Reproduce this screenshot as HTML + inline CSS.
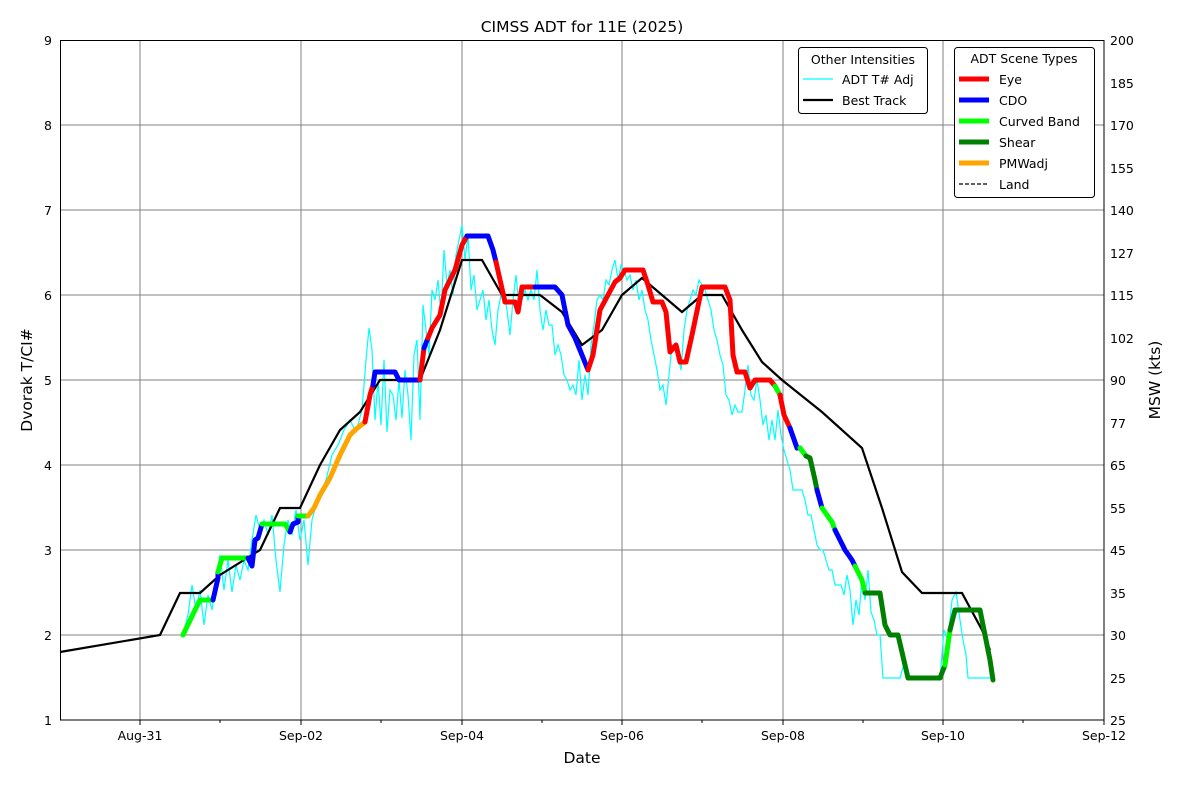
<!DOCTYPE html>
<html><head><meta charset="utf-8"><style>
html,body{margin:0;padding:0;background:#fff;width:1200px;height:800px;overflow:hidden}
text{font-family:"DejaVu Sans","Liberation Sans",sans-serif;fill:#000}
</style></head><body>
<svg width="1200" height="800" viewBox="0 0 1200 800" xmlns="http://www.w3.org/2000/svg">
<rect width="1200" height="800" fill="#fff"/>
<g stroke="#808080" stroke-width="1">
<line x1="140" y1="40" x2="140" y2="720"/><line x1="301" y1="40" x2="301" y2="720"/><line x1="462" y1="40" x2="462" y2="720"/><line x1="622" y1="40" x2="622" y2="720"/><line x1="783" y1="40" x2="783" y2="720"/><line x1="943" y1="40" x2="943" y2="720"/>
<line x1="60" y1="125" x2="1104" y2="125"/><line x1="60" y1="210" x2="1104" y2="210"/><line x1="60" y1="295" x2="1104" y2="295"/><line x1="60" y1="380" x2="1104" y2="380"/><line x1="60" y1="465" x2="1104" y2="465"/><line x1="60" y1="550" x2="1104" y2="550"/><line x1="60" y1="635" x2="1104" y2="635"/>
</g>
<polyline fill="none" stroke="#00ffff" stroke-width="1.2" points="183,635 188,615 192,585 196,610 200,590 204,625 208,595 212,610 216,580 220,555 224,590 228,560 232,592 236,565 240,580 244,560 248,570 252,540 256,515 260,530 264,520 268,535 272,515 276,560 280,592 284,545 288,520 292,535 296,510 300,540 304,520 308,565 312,520 316,505 320,495 326,480 332,455 338,445 344,430 350,420 356,432 362,410 366,360 369,328 372,350 375,420 378,380 381,425 384,360 387,432 390,390 393,395 396,420 399,380 402,418 405,370 408,395 411,440 414,355 417,340 420,420 423,305 426,330 429,355 432,290 435,300 438,280 441,315 444,250 447,285 450,270 453,295 456,255 459,240 462,225 465,260 468,235 471,290 474,275 477,310 480,300 483,290 486,320 489,300 492,330 495,345 498,310 501,295 504,290 507,310 510,335 513,300 516,275 519,305 522,300 525,290 528,300 531,290 534,300 537,270 540,310 543,330 546,310 549,325 552,325 555,355 558,345 561,355 564,375 567,380 570,390 573,385 576,395 579,360 582,400 585,375 588,395 591,345 594,325 597,300 600,295 603,300 606,280 609,285 612,270 615,260 618,280 621,265 624,270 627,280 630,275 633,290 636,280 639,300 642,290 645,310 648,320 651,340 654,355 657,370 660,390 663,385 666,405 669,375 672,345 675,350 678,355 681,370 684,330 687,310 690,300 693,290 696,295 699,280 702,285 705,290 708,300 711,310 714,330 717,340 720,355 723,365 726,395 729,400 732,415 735,405 738,412 742,412 745,390 748,365 751,395 754,400 757,380 760,400 763,425 766,415 769,440 772,420 775,440 778,410 781,435 784,450 787,460 790,470 793,490 796,490 799,490 802,490 805,500 808,515 811,515 814,530 817,545 820,550 823,550 826,560 829,570 832,570 835,585 838,585 841,585 844,595 847,575 850,590 853,625 856,600 859,615 862,578 865,600 868,570 871,612 874,620 877,635 880,635 883,678 900,678 905,660 910,678 940,678 944,630 948,640 952,600 956,592 960,620 963,640 966,655 968,678 990,678"/>
<polyline fill="none" stroke="#000" stroke-width="2.2" points="60,652 160,635 180,593 200,593 220,575 260,550 280,508 300,508 320,465 340,430 360,412 380,380 420,380 440,330 462,260 482,260 502,295 540,295 562,312 582,345 602,330 622,295 642,278 662,295 682,312 702,295 722,295 742,330 762,362 782,380 822,412 862,448 882,508 902,572 922,593 962,593 982,630 990,650"/>
<g fill="none" stroke-width="5" stroke-linejoin="round" stroke-linecap="round">
<polyline stroke="#00ff00" points="183,635 195,610 200,600 213,600"/>
<polyline stroke="#0000ff" points="213,600 218,578 218,572"/>
<polyline stroke="#00ff00" points="218,572 222,558 248,558"/>
<polyline stroke="#0000ff" points="248,558 252,566 255,540 258,538 262,524"/>
<polyline stroke="#00ff00" points="262,524 285,524 290,532"/>
<polyline stroke="#0000ff" points="290,532 293,524 298,522 298,516"/>
<polyline stroke="#00ff00" points="298,516 308,516"/>
<polyline stroke="#ffa500" points="308,516 314,508 320,495 330,478 340,455 350,435 355,430 365,422"/>
<polyline stroke="#ff0000" points="365,422 370,395 373,385"/>
<polyline stroke="#0000ff" points="373,385 375,372 395,372 399,380 420,380"/>
<polyline stroke="#ff0000" points="420,380 424,348"/>
<polyline stroke="#0000ff" points="424,348 428,338"/>
<polyline stroke="#ff0000" points="428,338 432,328 440,315 445,290 455,270 462,245 467,236"/>
<polyline stroke="#0000ff" points="467,236 488,236 493,250 496,262"/>
<polyline stroke="#ff0000" points="496,262 505,302 515,302 518,312 522,287 535,287"/>
<polyline stroke="#0000ff" points="535,287 555,287 562,295 568,325 575,338 582,355 588,370"/>
<polyline stroke="#ff0000" points="588,370 593,355 600,310 608,295 615,282 620,278 625,270 643,270 648,285 653,302 662,302 666,312 670,352 676,345 680,362 686,362 692,335 702,287 725,287 730,300 733,355 737,372 745,372 750,388 755,380 770,380 775,386"/>
<polyline stroke="#00ff00" points="775,386 780,395"/>
<polyline stroke="#ff0000" points="780,395 784,415 790,428"/>
<polyline stroke="#0000ff" points="790,428 797,448 800,448"/>
<polyline stroke="#00ff00" points="800,448 806,456"/>
<polyline stroke="#008000" points="806,456 810,458 815,480 817,490"/>
<polyline stroke="#0000ff" points="817,490 822,508"/>
<polyline stroke="#00ff00" points="822,508 832,522 835,530"/>
<polyline stroke="#0000ff" points="835,530 845,550 852,560 855,566"/>
<polyline stroke="#00ff00" points="855,566 862,580 865,593"/>
<polyline stroke="#008000" points="865,593 880,593 885,625 890,635 898,635 905,665 908,678 940,678 945,665"/>
<polyline stroke="#00ff00" points="945,665 950,630"/>
<polyline stroke="#008000" points="950,630 955,610 980,610 985,635 990,660 993,680"/>
</g>
<rect x="60.5" y="40.5" width="1043.5" height="679.5" fill="none" stroke="#000" stroke-width="1"/>
<g stroke="#000" stroke-width="1">
<line x1="140" y1="720" x2="140" y2="725"/><line x1="301" y1="720" x2="301" y2="725"/><line x1="462" y1="720" x2="462" y2="725"/><line x1="622" y1="720" x2="622" y2="725"/><line x1="783" y1="720" x2="783" y2="725"/><line x1="943" y1="720" x2="943" y2="725"/><line x1="1104" y1="720" x2="1104" y2="725"/>
<line x1="220" y1="720" x2="220" y2="723"/><line x1="381" y1="720" x2="381" y2="723"/><line x1="542" y1="720" x2="542" y2="723"/><line x1="702" y1="720" x2="702" y2="723"/><line x1="863" y1="720" x2="863" y2="723"/><line x1="1023" y1="720" x2="1023" y2="723"/>
</g>
<g font-size="12.5" text-anchor="end">
<text x="52" y="45">9</text><text x="52" y="130">8</text><text x="52" y="215">7</text><text x="52" y="300">6</text><text x="52" y="385">5</text><text x="52" y="470">4</text><text x="52" y="555">3</text><text x="52" y="640">2</text><text x="52" y="725">1</text>
</g>
<g font-size="12.5" text-anchor="start">
<text x="1110" y="45">200</text><text x="1110" y="88">185</text><text x="1110" y="130">170</text><text x="1110" y="173">155</text><text x="1110" y="215">140</text><text x="1110" y="258">127</text><text x="1110" y="300">115</text><text x="1110" y="343">102</text><text x="1110" y="385">90</text><text x="1110" y="428">77</text><text x="1110" y="470">65</text><text x="1110" y="513">55</text><text x="1110" y="555">45</text><text x="1110" y="598">35</text><text x="1110" y="640">30</text><text x="1110" y="683">25</text><text x="1110" y="725">25</text>
</g>
<g font-size="12.5" text-anchor="middle">
<text x="140" y="740">Aug-31</text><text x="301" y="740">Sep-02</text><text x="462" y="740">Sep-04</text><text x="622" y="740">Sep-06</text><text x="783" y="740">Sep-08</text><text x="943" y="740">Sep-10</text><text x="1104" y="740">Sep-12</text>
</g>
<text x="582" y="32" font-size="15.5" text-anchor="middle">CIMSS ADT for 11E (2025)</text>
<text x="582" y="763" font-size="15.5" text-anchor="middle">Date</text>
<text transform="translate(32,380) rotate(-90)" font-size="15.5" text-anchor="middle">Dvorak T/CI#</text>
<text transform="translate(1160,380) rotate(-90)" font-size="15.5" text-anchor="middle">MSW (kts)</text>
<rect x="798.5" y="47.5" width="129" height="66" rx="3" fill="#fff" stroke="#000"/>
<text x="863" y="64" font-size="12.5" text-anchor="middle">Other Intensities</text>
<line x1="803" y1="79" x2="833" y2="79" stroke="#00ffff" stroke-width="1.2"/>
<text x="842" y="84" font-size="12.5">ADT T# Adj</text>
<line x1="803" y1="100" x2="833" y2="100" stroke="#000" stroke-width="2.2"/>
<text x="842" y="105" font-size="12.5">Best Track</text>
<rect x="954.5" y="47.5" width="140" height="150" rx="3" fill="#fff" stroke="#000"/>
<text x="1024" y="63" font-size="12.5" text-anchor="middle">ADT Scene Types</text>
<g stroke-width="5"><line x1="959" y1="79" x2="989" y2="79" stroke="#ff0000"/><line x1="959" y1="100" x2="989" y2="100" stroke="#0000ff"/><line x1="959" y1="121" x2="989" y2="121" stroke="#00ff00"/><line x1="959" y1="142" x2="989" y2="142" stroke="#008000"/><line x1="959" y1="163" x2="989" y2="163" stroke="#ffa500"/></g>
<line x1="959" y1="184" x2="989" y2="184" stroke="#000" stroke-width="1.2" stroke-dasharray="4,2"/>
<g font-size="12.5"><text x="999" y="84">Eye</text><text x="999" y="105">CDO</text><text x="999" y="126">Curved Band</text><text x="999" y="147">Shear</text><text x="999" y="168">PMWadj</text><text x="999" y="189">Land</text></g>
</svg>
</body></html>
